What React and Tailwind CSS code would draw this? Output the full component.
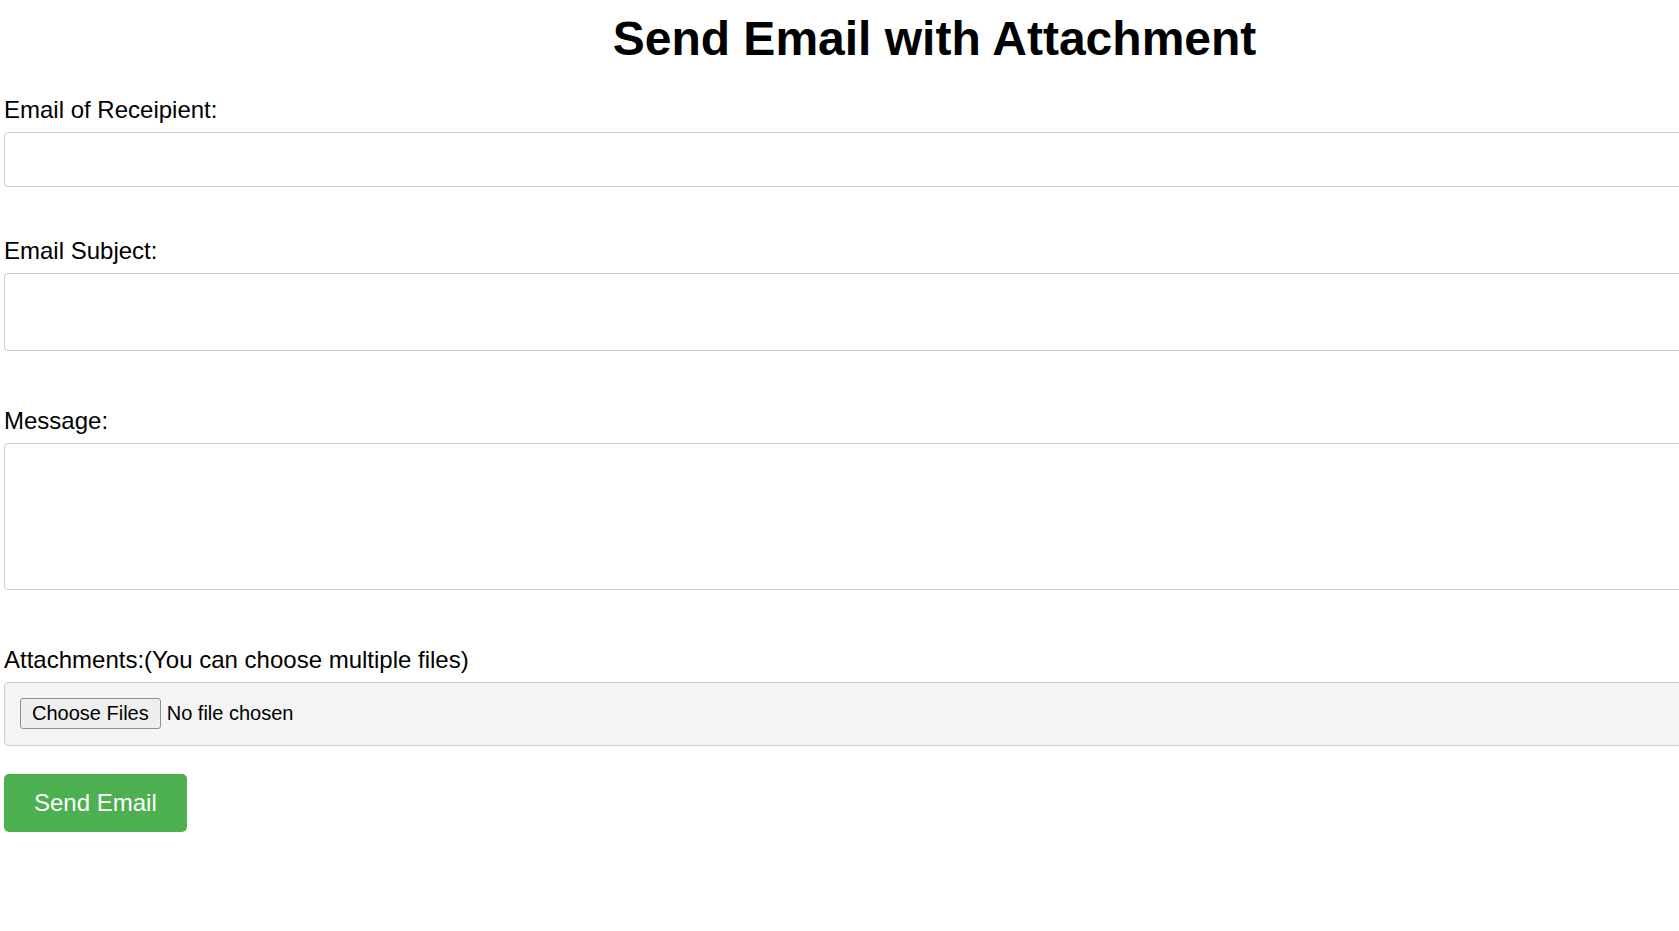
export default function App() {
  return (
    <div className="min-h-screen w-full overflow-x-hidden bg-white text-black font-['Liberation_Sans',Arial,sans-serif]">
      <form className="w-[1869px] px-[4px]" onSubmit={(e) => e.preventDefault()}>
        <h1 className="mt-[11px] text-center text-[48px] font-bold leading-[55px]">Send Email with Attachment</h1>

        {/* recipient */}
        <label htmlFor="to" className="mt-[30px] block text-[24px] leading-[28px]">Email of Receipient:</label>
        <input
          id="to"
          type="email"
          className="mt-[8px] block h-[55px] w-full rounded-[4px] border border-[#cccccc] px-[10px] text-[20px] outline-none"
        />

        {/* subject */}
        <label htmlFor="subject" className="mt-[50px] block text-[24px] leading-[28px]">Email Subject:</label>
        <input
          id="subject"
          type="text"
          className="mt-[8px] block h-[78px] w-full rounded-[4px] border border-[#cccccc] px-[10px] text-[20px] outline-none"
        />

        {/* message */}
        <label htmlFor="message" className="mt-[56px] block text-[24px] leading-[28px]">Message:</label>
        <textarea
          id="message"
          className="mt-[8px] block h-[147px] w-full resize-none rounded-[4px] border border-[#cccccc] p-[10px] text-[20px] outline-none"
        />

        {/* attachments */}
        <label htmlFor="files" className="mt-[56px] block text-[24px] leading-[28px]">Attachments:(You can choose multiple files)</label>
        <input
          id="files"
          type="file"
          multiple
          className="mt-[8px] block h-[64px] w-full rounded-[4px] border border-[#cccccc] bg-[#f4f4f4] px-[15px] py-[15px] text-[20px] leading-[31px] file:mr-[6px] file:h-[31px] file:rounded-[3px] file:border file:border-solid file:border-[#8f8f8f] file:bg-[#efefef] file:px-[11px] file:text-[20px] file:leading-[29px] file:text-black"
        />

        <button
          type="submit"
          className="mt-[28px] block h-[58px] rounded-[5px] bg-[#4caf50] px-[30px] text-[24px] leading-[28px] text-white"
        >
          Send Email
        </button>
      </form>
    </div>
  );
}
